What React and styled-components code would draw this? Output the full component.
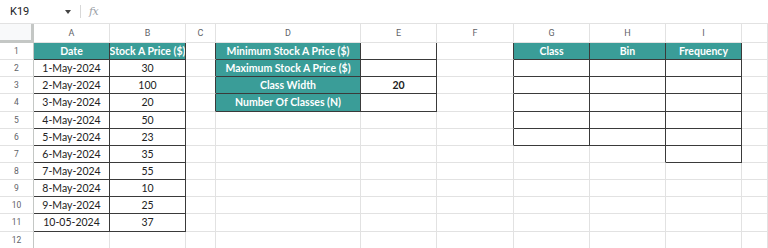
import React from "react";
import styled, { createGlobalStyle } from "styled-components";

const Global = createGlobalStyle`
  html, body { margin: 0; padding: 0; background: #fff; }
  body { width: 768px; height: 248px; overflow: hidden; font-family: Roboto, "Liberation Sans", sans-serif; }
`;

const TEAL = "#3a9d98";
const DARK = "#3a3a3a";
const GRID = "#e2e2e2";

const Page = styled.div`
  width: 768px;
  height: 248px;
  display: flex;
  flex-direction: column;
  overflow: hidden;
`;

const FormulaBar = styled.div`
  height: 24px;
  flex: none;
  display: flex;
  align-items: center;
  box-sizing: border-box;
  border-bottom: 1px solid ${GRID};
  padding-left: 10px;
`;

const NameBox = styled.div`
  width: 52px;
  font-size: 11px;
  color: #202124;
`;

const Caret = styled.div`
  width: 0;
  height: 0;
  border-left: 3.5px solid transparent;
  border-right: 3.5px solid transparent;
  border-top: 4px solid #444;
  margin-left: 3px;
`;

const Divider = styled.div`
  width: 1px;
  height: 13px;
  background: #d8d8d8;
  margin: 0 8px 0 9px;
`;

const Fx = styled.div`
  font-family: "DejaVu Serif", "Liberation Serif", serif;
  font-style: italic;
  font-size: 11px;
  color: #9aa0a6;
  letter-spacing: -0.5px;
`;

const Sheet = styled.div`
  display: grid;
  grid-template-columns: 34px 76px 76px 30px 145px 76px 77px 76px 76px 76px 1fr;
  grid-template-rows: 19px;
  grid-auto-rows: 17.15px;
`;

const Corner = styled.div`
  background: #f8f9fa;
  box-sizing: border-box;
  border-right: 3px solid #c4c7c5;
  border-bottom: 3px solid #c4c7c5;
`;

const ColHead = styled.div`
  box-sizing: border-box;
  border-right: 1px solid ${GRID};
  border-bottom: 1px solid ${GRID};
  display: flex;
  align-items: center;
  justify-content: center;
  font-size: 9px;
  color: #5f6368;
`;

const RowHead = styled.div`
  box-sizing: border-box;
  border-right: 1px solid #c4c7c5;
  border-bottom: 1px solid ${GRID};
  display: flex;
  align-items: center;
  justify-content: center;
  font-size: 8.5px;
  color: #5f6368;
`;

const Cell = styled.div`
  box-sizing: border-box;
  border-right: 1px solid ${(p) => p.$r};
  border-bottom: 1px solid ${(p) => p.$b};
  background: ${(p) => (p.$head ? TEAL : "#fff")};
  color: ${(p) => (p.$head ? "#fff" : "#222")};
  font-family: Lato, "Liberation Sans", sans-serif;
  font-size: 10.5px;
  font-weight: ${(p) => (p.$bold || p.$head ? 700 : 400)};
  display: flex;
  align-items: center;
  justify-content: center;
  white-space: nowrap;
  overflow: hidden;
`;

const COLS = ["A", "B", "C", "D", "E", "F", "G", "H", "I", ""];

const values = {
  A1: { t: "Date", head: true },
  B1: { t: "Stock A Price ($)", head: true },
  D1: { t: "Minimum Stock A Price ($)", head: true },
  D2: { t: "Maximum Stock A Price ($)", head: true },
  D3: { t: "Class Width", head: true },
  D4: { t: "Number Of Classes (N)", head: true },
  E3: { t: "20", bold: true },
  G1: { t: "Class", head: true },
  H1: { t: "Bin", head: true },
  I1: { t: "Frequency", head: true },
};

const dates = [
  ["1-May-2024", "30"],
  ["2-May-2024", "100"],
  ["3-May-2024", "20"],
  ["4-May-2024", "50"],
  ["5-May-2024", "23"],
  ["6-May-2024", "35"],
  ["7-May-2024", "55"],
  ["8-May-2024", "10"],
  ["9-May-2024", "25"],
  ["10-05-2024", "37"],
];
dates.forEach(([d, v], i) => {
  values["A" + (i + 2)] = { t: d };
  values["B" + (i + 2)] = { t: v };
});

const inTable = (c, r) => {
  if ((c === "A" || c === "B") && r >= 1 && r <= 11) return true;
  if ((c === "D" || c === "E") && r >= 1 && r <= 4) return true;
  if (["G", "H", "I"].includes(c) && r >= 1 && r <= 6) return true;
  if (c === "I" && r === 7) return true;
  return false;
};

export default function App() {
  const rows = Array.from({ length: 12 }, (_, i) => i + 1);
  return (
    <Page>
      <Global />
      <FormulaBar>
        <NameBox>K19</NameBox>
        <Caret />
        <Divider />
        <Fx>fx</Fx>
      </FormulaBar>
      <Sheet>
        <Corner />
        {COLS.map((c, i) => (
          <ColHead key={"h" + i}>{c}</ColHead>
        ))}
        {rows.map((r) => (
          <React.Fragment key={r}>
            <RowHead>{r}</RowHead>
            {COLS.map((c, ci) => {
              const key = c + r;
              const v = values[key] || {};
              const own = c && inTable(c, r);
              const next = COLS[ci + 1];
              const rightDark = own || (next && inTable(next, r));
              return (
                <Cell
                  key={key + ci}
                  $r={rightDark ? DARK : GRID}
                  $b={own ? DARK : GRID}
                  $head={v.head}
                  $bold={v.bold}
                >
                  {v.t}
                </Cell>
              );
            })}
          </React.Fragment>
        ))}
      </Sheet>
    </Page>
  );
}
